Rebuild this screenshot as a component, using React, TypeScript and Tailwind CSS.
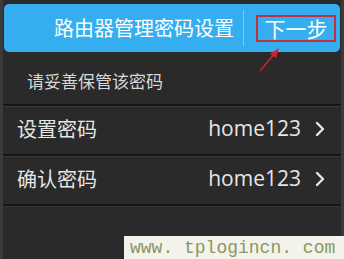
export default function App() {
  const rows = [
    { label: "设置密码", value: "home123" },
    { label: "确认密码", value: "home123" },
  ];

  return (
    <div
      className="relative h-[259px] w-[344px] overflow-hidden bg-[#2a2a2a]"
      style={{ fontFamily: '"Noto Sans CJK SC", "Noto Sans", sans-serif' }}
    >
      <div className="flex h-full flex-col border-x-[3px] border-[#3a3a3a] pt-[4px]">
        {/* header */}
        <div className="mx-[1px] flex h-[48px] items-center rounded-[5px] bg-[#35aef0] pr-[4px]">
          <div className="flex-1 pr-[9px] text-right text-[20px] leading-none text-white">
            路由器管理密码设置
          </div>
          <div className="h-[36px] w-[1px] bg-[#7ccaf3]" />
          <div className="ml-[12px] flex h-[27px] w-[80px] items-center justify-center text-[21px] leading-none text-white ring-2 ring-inset ring-[#c0303e]">
            下一步
          </div>
        </div>

        {/* note */}
        <div className="flex h-[52px] items-center pl-[24px] pt-[4px] text-[17px] leading-none text-[#d8d8d8]">
          请妥善保管该密码
        </div>

        {rows.map((row) => (
          <div key={row.label} className="flex flex-col">
            <div className="h-[2px] bg-[#151515]" />
            <div className="h-[1px] bg-[#3a3a3a]" />
            <div className="flex h-[47px] items-center pb-[4px] pl-[14px] pr-[16px] text-[#e6e6e6]">
              <span className="flex-1 text-[20px] leading-none">{row.label}</span>
              <span
                className="text-[21px] leading-none"
                style={{ fontFamily: '"Open Sans", "Noto Sans", sans-serif' }}
              >
                {row.value}
              </span>
              <svg
                className="ml-[14px]"
                width="10"
                height="16"
                viewBox="0 0 10 16"
                fill="none"
              >
                <path
                  d="M2 2l6 6-6 6"
                  stroke="#e6e6e6"
                  strokeWidth="2.4"
                  strokeLinecap="round"
                  strokeLinejoin="round"
                />
              </svg>
            </div>
          </div>
        ))}
        <div className="h-[2px] bg-[#151515]" />
        <div className="h-[1px] bg-[#363636]" />
      </div>

      {/* red arrow */}
      <svg
        className="absolute left-[255px] top-[44px]"
        width="30"
        height="30"
        viewBox="0 0 30 30"
      >
        <line x1="5" y1="27" x2="20" y2="9" stroke="#d42030" strokeWidth="1.5" />
        <polygon points="24,4 15,10 21,14" fill="#d42030" />
      </svg>

      {/* watermark */}
      <div
        className="absolute bottom-0 left-[124px] flex h-[23px] w-[220px] items-center bg-[#f3f3ec] pl-[6px] text-[18px] leading-none text-[#8a9660]"
        style={{ fontFamily: '"Liberation Mono", monospace' }}
      >
        www. tplogincn. com
      </div>
    </div>
  );
}
